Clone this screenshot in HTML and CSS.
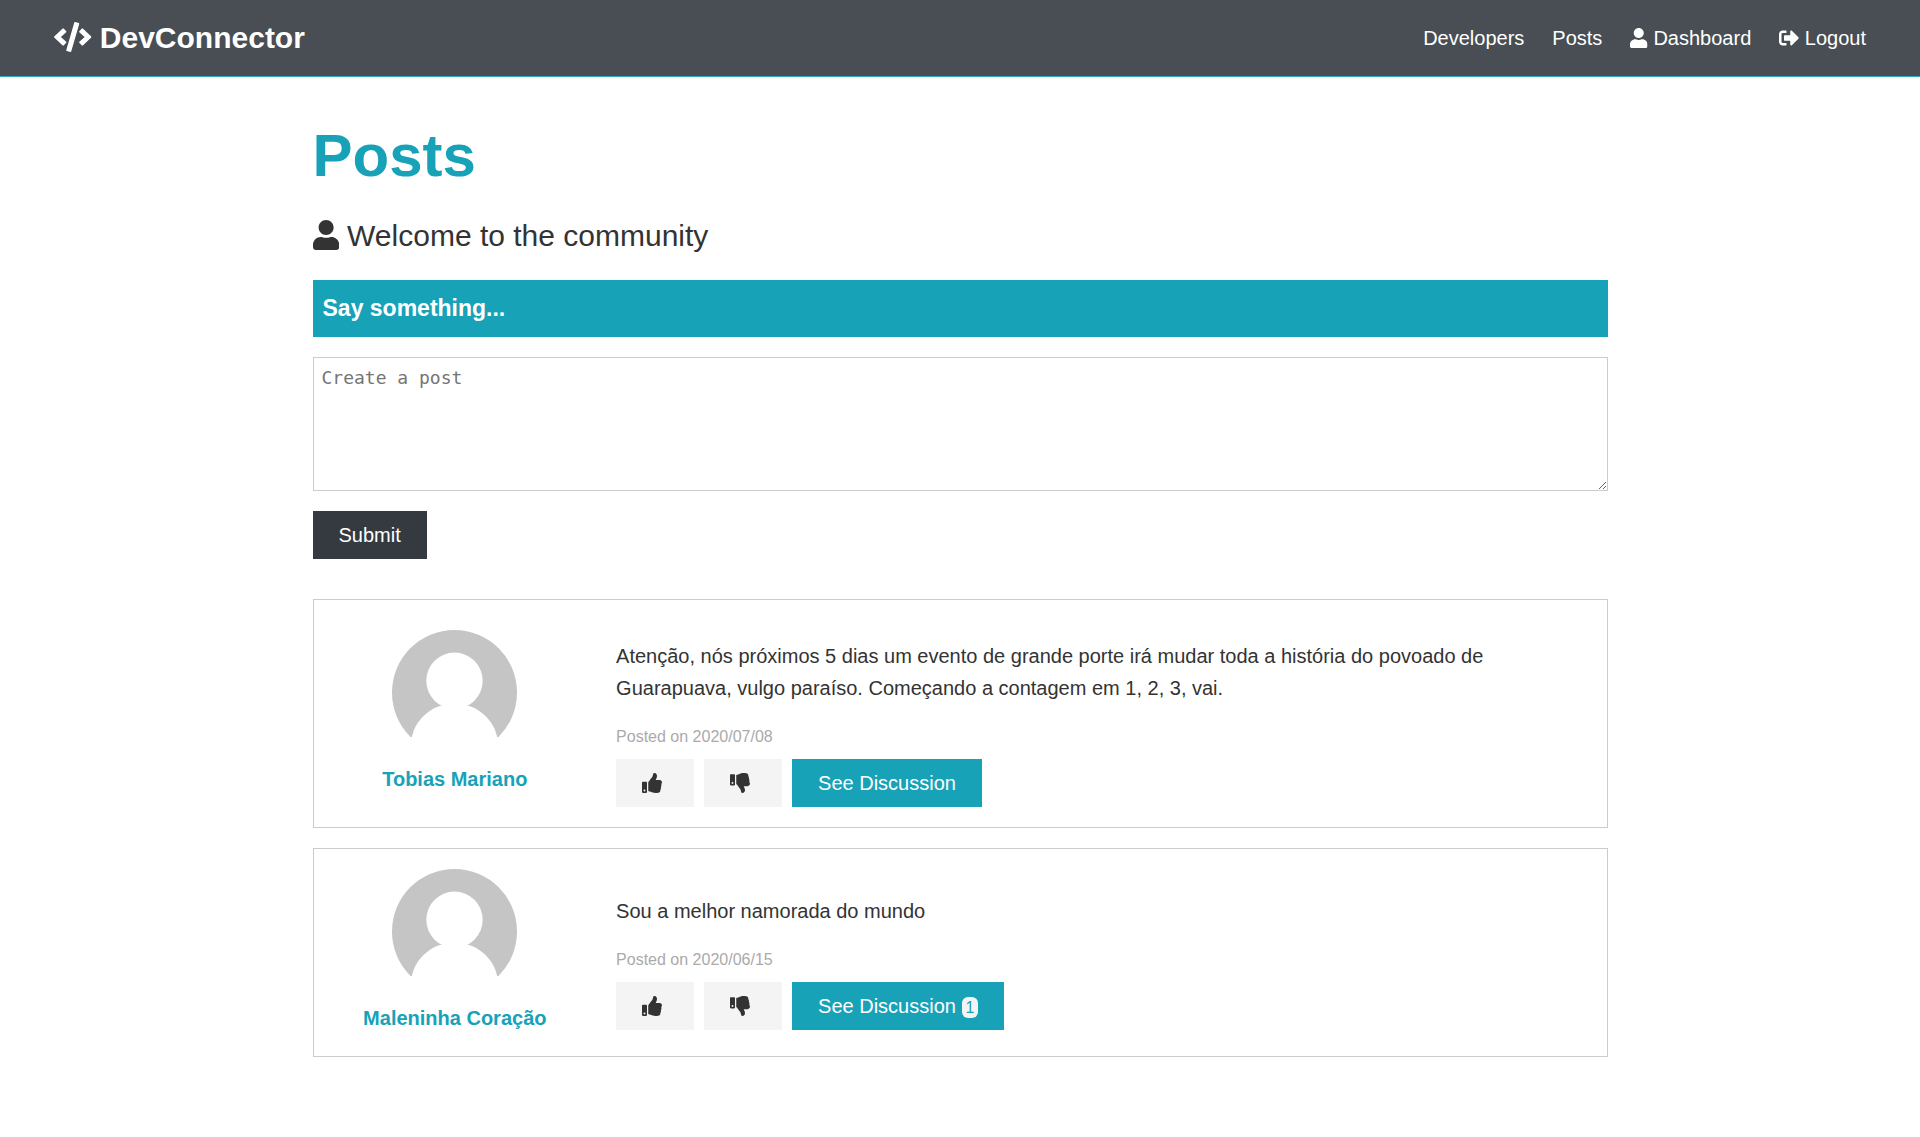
FILE: index.html
```html
<!DOCTYPE html>
<html lang="en">
<head>
  <meta charset="utf-8">
  <meta name="viewport" content="width=device-width, initial-scale=1">
  <title>DevConnector - Posts</title>
  <link rel="stylesheet" href="styles.css">
</head>
<body>
  <svg class="sprite" aria-hidden="true">
    <symbol id="icon-code" viewBox="0 0 640 512"><path d="M278.9 511.5l-61-17.7c-6.4-1.8-10-8.5-8.2-14.9L346.2 8.7c1.8-6.4 8.5-10 14.9-8.2l61 17.7c6.4 1.8 10 8.5 8.2 14.9L293.8 503.3c-1.9 6.4-8.5 10.1-14.9 8.2zm-114-112.2l43.5-46.4c4.6-4.9 4.3-12.7-.8-17.2L117 256l90.6-79.7c5.1-4.5 5.5-12.3.8-17.2l-43.5-46.4c-4.5-4.8-12.1-5.1-17-.5L3.8 247.2c-5.1 4.7-5.1 12.8 0 17.5l144.1 135.1c4.9 4.6 12.5 4.4 17-.5zm327.2.6l144.1-135.1c5.1-4.7 5.1-12.8 0-17.5L492.1 112.1c-4.8-4.5-12.4-4.3-17 .5L431.6 159c-4.6 4.9-4.3 12.7.8 17.2L523 256l-90.6 79.7c-5.1 4.5-5.5 12.3-.8 17.2l43.5 46.4c4.5 4.9 12.1 5.1 17 .6z"/></symbol>
    <symbol id="icon-user" viewBox="0 0 448 512"><path d="M224 256c70.7 0 128-57.3 128-128S294.7 0 224 0 96 57.3 96 128s57.3 128 128 128zm89.6 32h-16.7c-22.2 10.2-46.9 16-72.9 16s-50.6-5.8-72.9-16h-16.7C60.2 288 0 348.2 0 422.4V464c0 26.5 21.5 48 48 48h352c26.5 0 48-21.5 48-48v-41.6c0-74.2-60.2-134.4-134.4-134.4z"/></symbol>
    <symbol id="icon-logout" viewBox="0 0 512 512"><path d="M497 273L329 441c-15 15-41 4.5-41-17v-96H152c-13.3 0-24-10.7-24-24v-96c0-13.3 10.7-24 24-24h136V88c0-21.4 25.9-32 41-17l168 168c9.3 9.4 9.3 24.6 0 34zM192 436v-40c0-6.6-5.4-12-12-12H96c-17.7 0-32-14.3-32-32V160c0-17.7 14.3-32 32-32h84c6.6 0 12-5.4 12-12V76c0-6.6-5.4-12-12-12H96c-53 0-96 43-96 96v192c0 53 43 96 96 96h84c6.6 0 12-5.4 12-12z"/></symbol>
    <symbol id="icon-up" viewBox="0 0 512 512"><path d="M104 224H24c-13.255 0-24 10.745-24 24v240c0 13.255 10.745 24 24 24h80c13.255 0 24-10.745 24-24V248c0-13.255-10.745-24-24-24zM64 472c-13.255 0-24-10.745-24-24s10.745-24 24-24 24 10.745 24 24-10.745 24-24 24zM384 81.452c0 42.416-25.97 66.208-33.277 94.548h101.723c33.397 0 59.397 27.746 59.553 58.098.084 17.938-7.546 37.249-19.439 49.197l-.11.11c9.836 23.337 8.237 56.037-9.308 79.469 8.681 25.895-.069 57.704-16.382 74.757 4.298 17.598 2.244 32.575-6.148 44.632C440.202 511.587 389.616 512 346.839 512l-2.845-.001c-48.287-.017-87.806-17.598-119.56-31.725-15.957-7.099-36.821-15.887-52.651-16.178-6.54-.12-11.783-5.457-11.783-11.998v-213.77c0-3.2 1.282-6.271 3.558-8.521 39.614-39.144 56.648-80.587 89.117-113.111 14.804-14.832 20.188-37.236 25.393-58.902C282.515 39.293 291.817 0 312 0c24 0 72 8 72 81.452z"/></symbol>
    <symbol id="icon-down" viewBox="0 0 512 512"><path d="M0 56v240c0 13.255 10.745 24 24 24h80c13.255 0 24-10.745 24-24V56c0-13.255-10.745-24-24-24H24C10.745 32 0 42.745 0 56zm40 200c0-13.255 10.745-24 24-24s24 10.745 24 24-10.745 24-24 24-24-10.745-24-24zm272 256c-20.183 0-29.485-39.293-33.931-57.795-5.206-21.666-10.589-44.07-25.393-58.902-32.469-32.524-49.503-73.967-89.117-113.111a11.98 11.98 0 0 1-3.558-8.521V59.901c0-6.541 5.243-11.878 11.783-11.998 15.831-.29 36.694-9.079 52.651-16.178C256.189 17.598 295.709.017 343.995 0h2.844c42.777 0 93.363.413 113.774 29.737 8.392 12.057 10.446 27.034 6.148 44.632 16.312 17.053 25.063 48.863 16.382 74.757 17.544 23.432 19.143 56.132 9.308 79.469l.11.11c11.893 11.949 19.523 31.259 19.439 49.197-.156 30.352-26.157 58.098-59.553 58.098H350.723C358.03 364.34 384 388.132 384 430.548 384 504 336 512 312 512z"/></symbol>
    <symbol id="avatar" viewBox="0 0 125 125"><circle cx="62.5" cy="62.5" r="62.5" fill="#c5c5c5"/><path d="M0 107.3h125V125H0z" fill="#fff"/><circle cx="62.5" cy="50.8" r="28.2" fill="#fff"/><circle cx="62.5" cy="117.6" r="44.2" fill="#fff"/></symbol>
  </svg>

  <header class="navbar">
    <h1 class="brand"><a href="#"><svg class="icon icon-wide" aria-hidden="true"><use href="#icon-code"/></svg> DevConnector</a></h1>
    <nav class="nav-links">
      <a href="#">Developers</a>
      <a href="#">Posts</a>
      <a href="#"><svg class="icon icon-narrow" aria-hidden="true"><use href="#icon-user"/></svg> Dashboard</a>
      <a href="#"><svg class="icon" aria-hidden="true"><use href="#icon-logout"/></svg> Logout</a>
    </nav>
  </header>

  <main class="container">
    <h1 class="title">Posts</h1>
    <p class="lead"><svg class="icon icon-narrow" aria-hidden="true"><use href="#icon-user"/></svg> Welcome to the community</p>

    <form class="post-form">
      <label class="form-heading" for="post-text">Say something...</label>
      <textarea class="post-input" id="post-text" placeholder="Create a post"></textarea>
      <button class="btn btn-dark" type="submit">Submit</button>
    </form>

    <section class="posts">
      <article class="post">
        <a class="author" href="#">
          <svg class="avatar" aria-hidden="true"><use href="#avatar"/></svg>
          <span>Tobias Mariano</span>
        </a>
        <div class="post-body">
          <p class="post-text">Atenção, nós próximos 5 dias um evento de grande porte irá mudar toda a história do povoado de Guarapuava, vulgo paraíso. Começando a contagem em 1, 2, 3, vai.</p>
          <p class="post-date">Posted on 2020/07/08</p>
          <div class="actions">
            <button class="btn btn-light" type="button" aria-label="Like"><svg class="icon" aria-hidden="true"><use href="#icon-up"/></svg></button>
            <button class="btn btn-light" type="button" aria-label="Unlike"><svg class="icon" aria-hidden="true"><use href="#icon-down"/></svg></button>
            <a class="btn btn-primary" href="#">See Discussion</a>
          </div>
        </div>
      </article>

      <article class="post">
        <a class="author" href="#">
          <svg class="avatar" aria-hidden="true"><use href="#avatar"/></svg>
          <span>Maleninha Coração</span>
        </a>
        <div class="post-body">
          <p class="post-text">Sou a melhor namorada do mundo</p>
          <p class="post-date">Posted on 2020/06/15</p>
          <div class="actions">
            <button class="btn btn-light" type="button" aria-label="Like"><svg class="icon" aria-hidden="true"><use href="#icon-up"/></svg></button>
            <button class="btn btn-light" type="button" aria-label="Unlike"><svg class="icon" aria-hidden="true"><use href="#icon-down"/></svg></button>
            <a class="btn btn-primary" href="#">See Discussion <span class="count">1</span></a>
          </div>
        </div>
      </article>
    </section>
  </main>
</body>
</html>
```
FILE: styles.css
```css
:root {
  --primary: #17a2b8;
  --dark: #343a40;
  --light: #f4f4f4;
  --line: #ccc;
}

* {
  box-sizing: border-box;
  margin: 0;
  padding: 0;
}

body {
  background: #fff;
  color: #333;
  font: 20px/32px Arial, "Liberation Sans", sans-serif;
}

a {
  color: var(--primary);
  text-decoration: none;
}

.sprite {
  display: none;
}

.icon {
  width: 1em;
  height: 1em;
  fill: currentColor;
  vertical-align: -0.125em;
}

.icon-wide {
  width: 1.25em;
}

.icon-narrow {
  width: 0.875em;
}

/* Navbar */
.navbar {
  display: flex;
  flex-wrap: wrap;
  align-items: center;
  justify-content: space-between;
  padding: 14px 54px;
  background: #484e53;
  border-bottom: 1px solid #2eabbf;
}

.navbar a {
  color: #fff;
}

.brand {
  font-size: 30px;
  line-height: 48px;
}

.nav-links {
  display: flex;
  flex-wrap: wrap;
  gap: 28px;
}

/* Page */
.container {
  max-width: 1375px;
  margin: 0 auto;
  padding: 43px 40px 80px;
}

.title {
  margin-bottom: 20px;
  color: var(--primary);
  font-size: 60px;
  line-height: 72px;
}

.lead {
  margin-bottom: 20px;
  font-size: 30px;
  line-height: 48px;
}

/* Buttons */
.btn {
  display: inline-block;
  padding: 8px 26px;
  border: 0;
  font: inherit;
  cursor: pointer;
}

.btn-dark {
  background: var(--dark);
  color: #fff;
}

.btn-light {
  padding-right: 32px;
  background: var(--light);
  color: #333;
}

.btn-primary {
  background: var(--primary);
  color: #fff;
}

/* Post form */
.post-form {
  display: flex;
  flex-direction: column;
  align-items: flex-start;
  gap: 20px;
  margin-bottom: 40px;
}

.form-heading {
  width: 100%;
  padding: 10px;
  background: var(--primary);
  color: #fff;
  font-size: 23px;
  font-weight: bold;
  line-height: 37px;
}

.post-input {
  width: 100%;
  height: 134px;
  padding: 8px;
  border: 1px solid var(--line);
  color: #333;
  font: 18px/24px Consolas, "DejaVu Sans Mono", monospace;
  resize: vertical;
}

.post-input::placeholder {
  color: #757575;
}

/* Posts */
.posts {
  display: grid;
  gap: 20px;
}

.post {
  display: grid;
  grid-template-columns: 1fr 4fr;
  align-items: center;
  gap: 40px;
  padding: 20px;
  border: 1px solid var(--line);
}

.author {
  display: flex;
  flex-direction: column;
  align-items: center;
  gap: 8px;
  padding-bottom: 2px;
  font-weight: bold;
  text-align: center;
}

.avatar {
  width: 125px;
  height: 125px;
}

.post-text {
  margin: 20px 0;
}

.post-date {
  margin-bottom: 10px;
  color: #aaa;
  font-size: 16px;
  line-height: 25px;
}

.actions {
  display: flex;
  flex-wrap: wrap;
  gap: 10px;
}

.count {
  padding: 2px 4px;
  border-radius: 6px;
  background: var(--light);
  color: var(--primary);
  font-size: 16px;
  line-height: 16px;
}
```
